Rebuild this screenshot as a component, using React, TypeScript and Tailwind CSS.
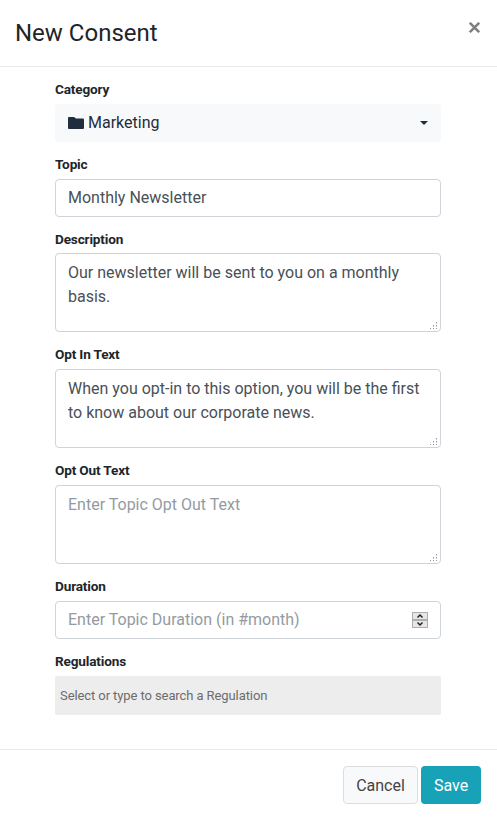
import type { ReactNode } from "react";

const control =
  "block w-full rounded-[4px] border border-[#ced4da] bg-white px-3 text-base leading-6 text-[#495057] outline-none placeholder:text-[#939ba2] placeholder:opacity-100";

function Field({ label, tight, children }: { label: string; tight?: boolean; children: ReactNode }) {
  return (
    <div>
      <div className={`flex flex-col justify-end ${tight ? "h-9 pb-1" : "h-[37px] pb-[5px]"}`}>
        <label className="text-[13.6px] leading-5 font-bold tracking-[-0.16px] text-[#212529]">{label}</label>
      </div>
      {children}
    </div>
  );
}

function TextArea({ value, placeholder }: { value?: string; placeholder?: string }) {
  return (
    <div className="relative">
      <textarea
        className={`${control} h-[79px] resize-none overflow-hidden py-[7px]`}
        defaultValue={value}
        placeholder={placeholder}
        spellCheck={false}
      />
      <svg className="absolute right-1 bottom-[3px]" width="7" height="7" fill="#999" shapeRendering="crispEdges">
        <path d="M6 0h1v1h-1zM3 3h1v1h-1zM6 3h1v1h-1zM0 6h1v1h-1zM3 6h1v1h-1zM6 6h1v1h-1z" />
        <path fill="#ccc" d="M6 1h1v1h-1zM3 4h1v1h-1zM6 4h1v1h-1z" />
      </svg>
    </div>
  );
}

function Stepper() {
  return (
    <svg className="absolute top-[11px] right-[13px]" width="16" height="16" shapeRendering="crispEdges">
      <path fill="#adadad" d="M0 0h16v16H0z" />
      <path fill="#e6e6e6" d="M1 1h14v6H1zM1 9h14v6H1z" />
      <path
        fill="none"
        stroke="#222"
        strokeWidth="1.5"
        shapeRendering="auto"
        d="M5.500 5.500L8 3l2.500 2.500M5.500 10.500L8 13l2.500-2.500"
      />
    </svg>
  );
}

export default function App() {
  return (
    <div className="flex h-[818px] w-[497px] flex-col overflow-hidden bg-white font-[Roboto,sans-serif] text-base leading-6 text-[#212529]">
      <header className="flex h-[67px] shrink-0 items-start justify-between border-b border-[#e9ecef] pr-4 pl-[15px]">
        <h1 className="pt-[15px] text-2xl leading-9">New Consent</h1>
        <button aria-label="Close" className="mt-[21px] p-[1px] text-[#7f7f7f]">
          <svg width="11" height="11" fill="none" stroke="currentColor" strokeWidth="2.5">
            <path d="M.8.8l9.400 9.400M10.200.8L.8 10.200" />
          </svg>
        </button>
      </header>

      <main className="flex-1 pr-14 pl-[55px]">
        <Field label="Category">
          <button className="flex h-[38px] w-full items-center rounded-[3px] bg-[#f8f9fa] px-[13px] text-[#1f2d3d]">
            <svg width="16" height="12" fill="currentColor">
              <path d="M1 0h5l2 1.500h7a1 1 0 0 1 1 1V11a1 1 0 0 1-1 1H1a1 1 0 0 1-1-1V1a1 1 0 0 1 1-1z" />
            </svg>
            <span className="ml-1 flex-1 text-left">Marketing</span>
            <svg width="8" height="4" fill="currentColor">
              <path d="M0 0h8L4 4z" />
            </svg>
          </button>
        </Field>
        <Field label="Topic">
          <input className={`${control} h-[38px] pb-[2px]`} defaultValue="Monthly Newsletter" />
        </Field>
        <Field label="Description" tight>
          <TextArea value="Our newsletter will be sent to you on a monthly basis." />
        </Field>
        <Field label="Opt In Text">
          <TextArea value="When you opt-in to this option, you will be the first to know about our corporate news." />
        </Field>
        <Field label="Opt Out Text">
          <TextArea placeholder="Enter Topic Opt Out Text" />
        </Field>
        <Field label="Duration">
          <div className="relative">
            <input className={`${control} h-[38px] pb-[2px]`} placeholder="Enter Topic Duration (in #month)" />
            <Stepper />
          </div>
        </Field>
        <Field label="Regulations">
          <input
            className="block h-[39px] w-full rounded-[2px] bg-[#ededed] px-[5px] text-[13px] tracking-[-0.09px] text-[#666] outline-none placeholder:text-[#6c6c6c] placeholder:opacity-100"
            placeholder="Select or type to search a Regulation"
          />
        </Field>
      </main>

      <footer className="flex h-[69px] shrink-0 items-start justify-end gap-[3px] border-t border-[#e9ecef] pt-4 pr-4">
        <button className="h-[38px] w-[75px] rounded-[4px] border border-[#ddd] bg-[#f8f9fa] pt-px text-[#444]">
          Cancel
        </button>
        <button className="h-[38px] w-[60px] rounded-[4px] bg-[#17a2b8] pt-px text-white">Save</button>
      </footer>
    </div>
  );
}
